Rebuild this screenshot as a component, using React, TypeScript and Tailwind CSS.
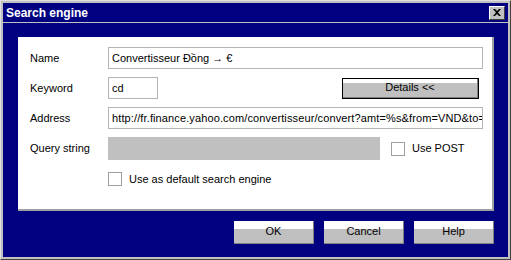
import React from 'react';

const font = { fontFamily: '"Liberation Sans", Arial, sans-serif' };

function Checkbox() {
  return <div className="w-[14px] h-[14px] bg-white border border-[#a0a0a0] shrink-0" />;
}

function PushButton({ label }: { label: string }) {
  return (
    <div className="w-[80px] h-[23px] flex items-center justify-center text-[11px] text-black border-r border-b border-[#808080] bg-[linear-gradient(to_bottom,#ffffff_0,#ffffff_38%,#c0c0c0_38%)]">
      {label}
    </div>
  );
}

export default function App() {
  return (
    <div style={font} className="w-[511px] h-[260px] bg-[#c0c0c0] border border-t-[#e0e0e0] border-l-[#e0e0e0] border-r-[#404040] border-b-[#404040] p-[2px] overflow-hidden">
      <div className="w-full h-full bg-[#000080] flex flex-col">
        {/* title bar */}
        <div className="h-[19px] flex items-center justify-between pl-[3px] pr-[3px]">
          <span className="text-white font-bold text-[12px] leading-none">Search engine</span>
          <div className="w-[16px] h-[14px] bg-[#c0c0c0] border border-t-white border-l-white border-r-[#404040] border-b-[#404040] flex items-center justify-center">
            <svg width="8" height="7" viewBox="0 0 8 7">
              <path d="M0 0h2l2 2 2-2h2L5 3.5 8 7H6L4 5 2 7H0l3-3.5z" fill="#000" />
            </svg>
          </div>
        </div>
        <div className="h-px bg-[#c0c0c0]" />

        <div className="flex-1 flex flex-col pt-[14px] pl-[15px] pr-[14px]">
          {/* panel */}
          <div className="bg-white border-r-2 border-b-2 border-[#a0a0a0] pt-[10px] pb-[21px] pl-[12px] pr-[9px] flex flex-col text-[11px] text-black">
            <div className="flex items-center h-[22px]">
              <span className="w-[78px]">Name</span>
              <div className="flex-1 h-[22px] border border-[#b4b4b4] flex items-center px-[3px]">Convertisseur Đồng → €</div>
            </div>
            <div className="flex items-center h-[22px] mt-[8px]">
              <span className="w-[78px]">Keyword</span>
              <div className="w-[50px] h-[22px] border border-[#b4b4b4] flex items-center px-[3px]">cd</div>
              <div className="ml-auto mr-[4px] w-[137px] h-[21px] border border-black">
                <div className="w-full h-full flex items-center justify-center border-r border-b border-[#808080] bg-[linear-gradient(to_bottom,#ffffff_0,#ffffff_22%,#c0c0c0_22%)]">
                  Details &lt;&lt;
                </div>
              </div>
            </div>
            <div className="flex items-center h-[22px] mt-[8px]">
              <span className="w-[78px]">Address</span>
              <div className="flex-1 h-[22px] border border-[#b4b4b4] flex items-center px-[3px] overflow-hidden whitespace-nowrap tracking-[0.12px]">
                http://fr.finance.yahoo.com/convertisseur/convert?amt=%s&amp;from=VND&amp;to=EUR
              </div>
            </div>
            <div className="flex items-center h-[23px] mt-[8px]">
              <span className="w-[78px]">Query string</span>
              <div className="w-[272px] h-[23px] bg-[#c0c0c0]" />
              <div className="ml-[11px] flex items-center gap-[7px]">
                <Checkbox />
                <span>Use POST</span>
              </div>
            </div>
            <div className="flex items-center mt-[11px] pl-[78px] gap-[7px]">
              <Checkbox />
              <span>Use as default search engine</span>
            </div>
          </div>

          {/* buttons */}
          <div className="flex justify-end gap-[10px] mt-[10px]">
            <PushButton label="OK" />
            <PushButton label="Cancel" />
            <PushButton label="Help" />
          </div>
        </div>
      </div>
    </div>
  );
}
